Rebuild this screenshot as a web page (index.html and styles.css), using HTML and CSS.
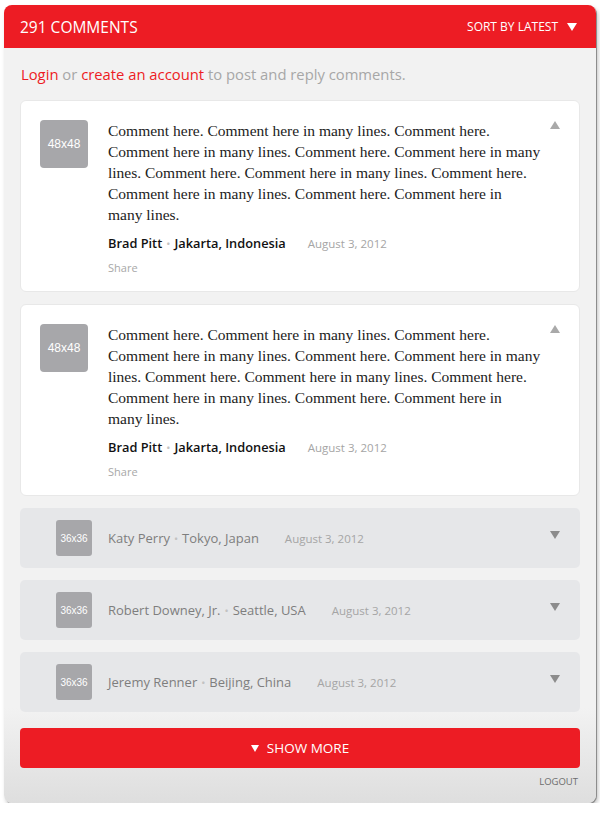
FILE: index.html
```html
<!DOCTYPE html>
<html>
<head>
<meta charset="utf-8">
<link rel="stylesheet" href="styles.css">
</head>
<body>
<div class="panel">
  <div class="header">
    <div class="title">291 Comments</div>
    <div class="sort">Sort by latest <svg class="tri" width="10" height="8" viewBox="0 0 10 8"><polygon points="0,0 10,0 5,8" fill="#fff"/></svg></div>
  </div>
  <div class="body">
    <div class="login"><a class="red">Login</a> or <a class="red">create an account</a> to post and reply comments.</div>

    <div class="card">
      <div class="avatar a48">48x48</div>
      <div class="content">
        <p class="text">Comment here. Comment here in many lines. Comment here. Comment here in many lines. Comment here. Comment here in many lines. Comment here. Comment here in many lines. Comment here. Comment here in many lines. Comment here. Comment here in many&nbsp;lines.</p>
        <div class="meta"><span class="name">Brad Pitt</span><span class="dot">•</span><span class="name">Jakarta, Indonesia</span><span class="date">August 3, 2012</span></div>
        <div class="share">Share</div>
      </div>
      <svg class="up" width="10" height="8" viewBox="0 0 10 8"><polygon points="0,8 10,8 5,0" fill="#a9a9a9"/></svg>
    </div>

    <div class="card">
      <div class="avatar a48">48x48</div>
      <div class="content">
        <p class="text">Comment here. Comment here in many lines. Comment here. Comment here in many lines. Comment here. Comment here in many lines. Comment here. Comment here in many lines. Comment here. Comment here in many lines. Comment here. Comment here in many&nbsp;lines.</p>
        <div class="meta"><span class="name">Brad Pitt</span><span class="dot">•</span><span class="name">Jakarta, Indonesia</span><span class="date">August 3, 2012</span></div>
        <div class="share">Share</div>
      </div>
      <svg class="up" width="10" height="8" viewBox="0 0 10 8"><polygon points="0,8 10,8 5,0" fill="#a9a9a9"/></svg>
    </div>

    <div class="row">
      <div class="avatar a36">36x36</div>
      <div class="meta gray"><span class="name">Katy Perry</span><span class="dot">•</span><span class="name">Tokyo, Japan</span><span class="date">August 3, 2012</span></div>
      <svg class="down" width="10" height="8" viewBox="0 0 10 8"><polygon points="0,0 10,0 5,8" fill="#8c8c8c"/></svg>
    </div>
    <div class="row">
      <div class="avatar a36">36x36</div>
      <div class="meta gray"><span class="name">Robert Downey, Jr.</span><span class="dot">•</span><span class="name">Seattle, USA</span><span class="date">August 3, 2012</span></div>
      <svg class="down" width="10" height="8" viewBox="0 0 10 8"><polygon points="0,0 10,0 5,8" fill="#8c8c8c"/></svg>
    </div>
    <div class="row">
      <div class="avatar a36">36x36</div>
      <div class="meta gray"><span class="name">Jeremy Renner</span><span class="dot">•</span><span class="name">Beijing, China</span><span class="date">August 3, 2012</span></div>
      <svg class="down" width="10" height="8" viewBox="0 0 10 8"><polygon points="0,0 10,0 5,8" fill="#8c8c8c"/></svg>
    </div>

    <div class="more"><svg width="8" height="7" viewBox="0 0 8 7"><polygon points="0,0 8,0 4,7" fill="#fff"/></svg><span>Show more</span></div>
    <div class="logout">Logout</div>
  </div>
</div>
</body>
</html>
```
FILE: styles.css
```css
* { box-sizing: border-box; }
body {
  margin: 0;
  background: #fff;
  font-family: "Open Sans", "Liberation Sans", sans-serif;
}
.panel {
  margin: 5px 0 0 4px;
  width: 592px;
  height: 798px;
  border-radius: 8px;
  background: linear-gradient(to bottom, #f2f2f2 0, #f2f2f2 calc(100% - 95px), #dedede 100%);
  box-shadow: 1px 1px 0 #8d8d8d, 2px 3px 4px rgba(0,0,0,0.25);
  overflow: hidden;
}
.header {
  height: 43px;
  background: #ed1c24;
  display: flex;
  align-items: center;
  justify-content: space-between;
  padding: 0 19px 0 16px;
  color: #fff;
  text-transform: uppercase;
}
.title { font-size: 15.5px; font-weight: 500; }
.sort { font-size: 12px; font-weight: 500; display: flex; align-items: center; gap: 9px; }
.tri { display: block; }
.body { padding: 0 16px; }
.login {
  height: 52px;
  line-height: 52px;
  font-size: 14.8px;
  color: #a7a7a7;
  padding-left: 1px;
}
.red { color: #ed1c24; }
.card {
  background: #fff;
  border-radius: 6px;
  border: 1px solid #e8e8e8;
  display: flex;
  align-items: flex-start;
  padding: 19px 19px 14px 19px;
  margin-bottom: 12px;
}
.avatar {
  background: #a7a7aa;
  color: #fff;
  font-family: "Liberation Sans", Arial, sans-serif;
  display: flex;
  align-items: center;
  justify-content: center;
  flex: none;
}
.a48 { width: 48px; height: 48px; border-radius: 4px; font-size: 12px; margin-right: 20px; }
.a36 { width: 36px; height: 36px; border-radius: 3px; font-size: 10px; margin-right: 16px; }
.content { width: 438px; flex: none; }
.text {
  margin: 0 0 9px 0;
  font-family: "Liberation Serif", "Times New Roman", serif;
  font-size: 15.5px;
  line-height: 21px;
  color: #222;
}
.meta {
  display: flex;
  align-items: baseline;
  font-size: 12.8px;
  line-height: 18px;
  color: #111;
}
.name { font-weight: 600; }
.dot { color: #c2c2c2; font-size: 11px; margin: 0 4px; }
.date { color: #a5a5a5; font-size: 11.5px; margin-left: 22px; font-weight: 400; }
.share { font-size: 11px; color: #a8a8a8; line-height: 18px; margin-top: 6px; }
.up { margin-left: auto; margin-top: 1px; flex: none; }
.row {
  height: 60px;
  background: #e6e7e9;
  border-radius: 5px;
  display: flex;
  align-items: center;
  padding: 0 20px 0 36px;
  margin-bottom: 12px;
}
.meta.gray { color: #7e7e7e; font-size: 13px; }
.meta.gray .name { font-weight: 500; }
.meta.gray .date { margin-left: 26px; }
.down { margin-left: auto; margin-top: -6px; flex: none; }
.more {
  margin-top: 16px;
  height: 40px;
  background: #ed1c24;
  border-radius: 4px;
  color: #fff;
  text-transform: uppercase;
  font-size: 13.5px;
  font-weight: 500;
  display: flex;
  align-items: center;
  justify-content: center;
  gap: 8px;
}
.more svg { display: block; }
.logout {
  text-align: right;
  text-transform: uppercase;
  font-size: 9.5px;
  color: #6d6d6d;
  padding: 7px 2px 0 0;
}
```
